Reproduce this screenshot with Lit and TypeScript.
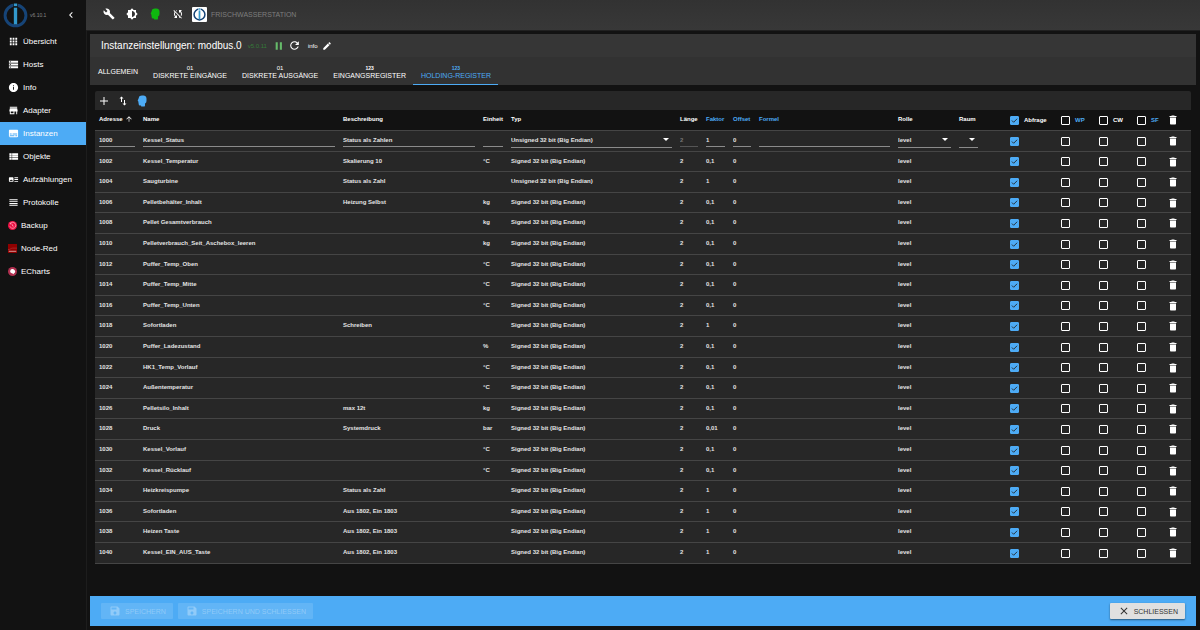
import { LitElement, html, css, svg, nothing } from "lit";
import { customElement, state } from "lit/decorators.js";
import { classMap } from "lit/directives/class-map.js";

const paths: Record<string, string> = {
  build: "M22.7 19l-9.1-9.1c.9-2.3.4-5-1.5-6.9-2-2-5-2.4-7.4-1.3L9 6 6 9 1.6 4.7C.4 7.1.9 10.1 2.9 12.1c1.9 1.9 4.6 2.4 6.9 1.5l9.1 9.1c.4.4 1 .4 1.4 0l2.3-2.3c.5-.4.5-1.1.1-1.4z",
  brightness: "M20 15.31L23.31 12 20 8.69V4h-4.69L12 .69 8.69 4H4v4.69L.69 12 4 15.31V20h4.69L12 23.31 15.31 20H20v-4.69zM12 18V6c3.31 0 6 2.69 6 6s-2.69 6-6 6z",
  head: "M12 1C8.500 1 6 2.500 5.500 6L3.500 11c-.3 1 .2 1.500 1 1.500L5.500 19c.2 1.200 1 2 2 2H10l.5 2H16c1.500 0 2-1 2-2v-4c2-1 3-3 3-6V7c0-4-3-6-6-6z",
  syncOff: "M10 6.35V4.26c-.8.21-1.55.54-2.23.96l1.46 1.46c.25-.12.5-.24.77-.33zm-7.14-.94l2.36 2.36C4.45 8.99 4 10.44 4 12c0 2.21.91 4.2 2.36 5.64L4 20h6v-6l-2.24 2.24C6.68 15.15 6 13.66 6 12c0-1 .25-1.94.68-2.77l8.08 8.08c-.25.13-.5.25-.77.34v2.09c.8-.21 1.55-.54 2.23-.96l2.36 2.36 1.27-1.27L4.14 4.14 2.86 5.41zM20 4h-6v6l2.24-2.24C17.32 8.85 18 10.34 18 12c0 1-.25 1.94-.68 2.77l1.46 1.46C19.55 15.01 20 13.56 20 12c0-2.21-.91-4.2-2.36-5.64L20 4z",
  refresh: "M17.65 6.35C16.2 4.9 14.21 4 12 4c-4.42 0-7.99 3.58-7.99 8s3.57 8 7.99 8c3.73 0 6.84-2.55 7.73-6h-2.08c-.82 2.33-3.04 4-5.65 4-3.31 0-6-2.69-6-6s2.69-6 6-6c1.66 0 3.14.69 4.22 1.78L13 11h7V4l-2.35 2.35z",
  pause: "M4 3h5v18H4zM14 3h5v18h-5z",
  edit: "M3 17.25V21h3.75L17.81 9.94l-3.75-3.75L3 17.25zM20.71 7.04c.39-.39.39-1.02 0-1.41l-2.34-2.34a.996.996 0 0 0-1.41 0l-1.83 1.83 3.75 3.75 1.83-1.83z",
  chevron: "M15.41 7.41L14 6l-6 6 6 6 1.41-1.41L10.83 12z",
  apps: "M4 8h4V4H4v4zm6 12h4v-4h-4v4zm-6 0h4v-4H4v4zm0-6h4v-4H4v4zm6 0h4v-4h-4v4zm6-10v4h4V4h-4zm-6 4h4V4h-4v4zm6 6h4v-4h-4v4zm0 6h4v-4h-4v4z",
  storage: "M2 20h20v-4H2v4zm2-3h2v2H4v-2zM2 4v4h20V4H2zm4 3H4V5h2v2zm-4 7h20v-4H2v4zm2-3h2v2H4v-2z",
  info: "M12 2C6.48 2 2 6.48 2 12s4.48 10 10 10 10-4.48 10-10S17.52 2 12 2zm1 15h-2v-6h2v6zm0-8h-2V7h2v2z",
  store: "M20 4H4v2h16V4zm1 10v-2l-1-5H4l-1 5v2h1v6h10v-6h4v6h2v-6h1zm-9 4H6v-4h6v4z",
  subtitles: "M20 4H4c-1.1 0-2 .9-2 2v12c0 1.1.9 2 2 2h16c1.1 0 2-.9 2-2V6c0-1.1-.9-2-2-2zM4 12h4v2H4v-2zm10 6H4v-2h10v2zm6 0h-4v-2h4v2zm0-4H10v-2h10v2z",
  viewList: "M3 14h5v-4H3v4zm0 5h5v-4H3v4zM3 9h5V5H3v4zm6 5h13v-4H9v4zm0 5h13v-4H9v4zM9 5v4h13V5H9z",
  artTrack: "M22 13h-8v-2h8v2zm0-6h-8v2h8V7zm-8 10h8v-2h-8v2zm-2-8v6c0 1.1-.9 2-2 2H4c-1.1 0-2-.9-2-2V9c0-1.1.9-2 2-2h6c1.1 0 2 .9 2 2zm-1.5 6l-2.25-3-1.75 2.26-1.25-1.51L3.5 15h7z",
  headline: "M3 15h18v-2H3v2zm0 4h18v-2H3v2zm0-8h18V9H3v2zm0-6v2h18V5H3z",
  add: "M20 13h-7v7h-2v-7H4v-2h7V4h2v7h7v2z",
  swap: "M9 3L5 6.99h3V14h2V6.99h3L9 3zm7 14.01V10h-2v7.01h-3L15 21l4-3.99h-3z",
  up: "M4 12l1.41 1.41L11 7.83V20h2V7.83l5.58 5.59L20 12l-8-8-8 8z",
  trash: "M6 19c0 1.1.9 2 2 2h8c1.1 0 2-.9 2-2V7H6v12zM19 4h-3.5l-1-1h-5l-1 1H5v2h14V4z",
  save: "M17 3H5c-1.11 0-2 .9-2 2v14c0 1.1.89 2 2 2h14c1.1 0 2-.9 2-2V7l-4-4zm-5 16c-1.66 0-3-1.34-3-3s1.34-3 3-3 3 1.34 3 3-1.34 3-3 3zm3-10H5V5h10v4z",
  close: "M19 6.41L17.59 5 12 10.59 6.41 5 5 6.41 10.59 12 5 17.59 6.41 19 12 13.41 17.59 19 19 17.59 13.41 12z",
};

const icon = (name: string, size = 12) =>
  html`<svg class="icon" width=${size} height=${size} viewBox="0 0 24 24" aria-hidden="true">${svg`<path d=${paths[name]} />`}</svg>`;

const logo = (size: number, cls: string) => html`<svg class=${cls} width=${size} height=${size} viewBox="0 0 24 24" aria-hidden="true">
  <circle cx="12" cy="12" r="10" fill="none" stroke="#164477" stroke-width="2.8" />
  <rect x="9.8" y="0" width="4.4" height="4" class="cut" />
  <rect x="10.4" y="4.5" width="3.2" height="16" fill="#3399cc" />
  <rect x="10.4" y="0.5" width="3.2" height="2.5" fill="#3399cc" />
</svg>`;

const pluginIcons: Record<string, unknown> = {
  backup: html`<svg width="9" height="9" viewBox="0 0 24 24" aria-hidden="true"><circle cx="12" cy="12" r="12" fill="#ee1144" /><path d="M6 7a8 8 0 1 1-1 7M6 4v4h4M12 9v4l3 1" fill="none" stroke="#ffc0cc" stroke-width="1.8" /></svg>`,
  nodered: html`<svg width="9" height="9" viewBox="0 0 24 24" aria-hidden="true"><rect width="24" height="24" fill="#8f0000" /><path d="M0 15c6 0 8-4 12-4h12" fill="none" stroke="#b84040" stroke-width="1.5" /><path d="M2 18h20v3H2z" fill="#c88" /></svg>`,
  echarts: html`<svg width="9" height="9" viewBox="0 0 24 24" aria-hidden="true"><circle cx="12" cy="12" r="12" fill="#b03050" /><path d="M6 10a6 6 0 0 1 11-2c4 3 2 9-2 9l2 3-5-3c-5 0-7-4-6-7z" fill="#fff" /></svg>`,
};

interface Register {
  address: string;
  name: string;
  description: string;
  unit: string;
  type: string;
  factor: string;
}

const S = "Signed 32 bit (Big Endian)";
const U = "Unsigned 32 bit (Big Endian)";

const registers: Register[] = (
  [
    ["1000", "Kessel_Status", "Status als Zahlen", "", U, "1"],
    ["1002", "Kessel_Temperatur", "Skalierung 10", "°C", S, "0,1"],
    ["1004", "Saugturbine", "Status als Zahl", "", U, "1"],
    ["1006", "Pelletbehälter_Inhalt", "Heizung Selbst", "kg", S, "0,1"],
    ["1008", "Pellet Gesamtverbrauch", "", "kg", S, "0,1"],
    ["1010", "Pelletverbrauch_Seit_Aschebox_leeren", "", "kg", S, "0,1"],
    ["1012", "Puffer_Temp_Oben", "", "°C", S, "0,1"],
    ["1014", "Puffer_Temp_Mitte", "", "°C", S, "0,1"],
    ["1016", "Puffer_Temp_Unten", "", "°C", S, "0,1"],
    ["1018", "Sofortladen", "Schreiben", "", S, "1"],
    ["1020", "Puffer_Ladezustand", "", "%", S, "0,1"],
    ["1022", "HK1_Temp_Vorlauf", "", "°C", S, "0,1"],
    ["1024", "Außentemperatur", "", "°C", S, "0,1"],
    ["1026", "Pelletsilo_Inhalt", "max 12t", "kg", S, "0,1"],
    ["1028", "Druck", "Systemdruck", "bar", S, "0,01"],
    ["1030", "Kessel_Vorlauf", "", "°C", S, "0,1"],
    ["1032", "Kessel_Rücklauf", "", "°C", S, "0,1"],
    ["1034", "Heizkreispumpe", "Status als Zahl", "", S, "1"],
    ["1036", "Sofortladen", "Aus 1802, Ein 1803", "", S, "1"],
    ["1038", "Heizen Taste", "Aus 1802, Ein 1803", "", S, "1"],
    ["1040", "Kessel_EIN_AUS_Taste", "Aus 1802, Ein 1803", "", S, "1"],
  ] as string[][]
).map(([address, name, description, unit, type, factor]) => ({ address, name, description, unit, type, factor }));

const base = css`
  * {
    box-sizing: border-box;
  }
  button,
  input,
  select {
    font: inherit;
    color: inherit;
    margin: 0;
    padding: 0;
    border: 0;
    border-radius: 0;
    background: none;
  }
  button {
    display: flex;
    align-items: center;
    justify-content: center;
    cursor: pointer;
  }
  svg {
    display: block;
    flex: none;
  }
  .icon {
    fill: currentColor;
  }
`;

@customElement("side-nav")
export class SideNav extends LitElement {
  static styles = [
    base,
    css`
      :host {
        display: block;
        width: 86px;
        flex: none;
        background: #121212;
        color: #fff;
      }
      .brand {
        display: flex;
        align-items: center;
        height: 30px;
        padding: 0 9px 0 3px;
      }
      .brand .cut {
        fill: #121212;
      }
      .version {
        flex: 1;
        padding-left: 2px;
        font-size: 5px;
        color: #888;
      }
      .item {
        display: flex;
        align-items: center;
        gap: 4px;
        height: 23px;
        padding: 0 8px;
        font-size: 8px;
        color: #fff;
        text-decoration: none;
        white-space: nowrap;
      }
      .item.active {
        background: #4dabf5;
      }
    `,
  ];

  private items = [
    ["apps", "Übersicht"],
    ["storage", "Hosts"],
    ["info", "Info"],
    ["store", "Adapter"],
    ["subtitles", "Instanzen"],
    ["viewList", "Objekte"],
    ["artTrack", "Aufzählungen"],
    ["headline", "Protokolle"],
    ["backup", "Backup"],
    ["nodered", "Node-Red"],
    ["echarts", "ECharts"],
  ];

  render() {
    return html`
      <div class="brand">
        ${logo(25, "logo")}<span class="version">v6.10.1</span>
        <button aria-label="Menü einklappen">${icon("chevron")}</button>
      </div>
      <nav>
        ${this.items.map(
          ([key, label]) => html`<a href="#${key}" class=${classMap({ item: true, active: key === "subtitles" })}
            >${pluginIcons[key] ?? icon(key, 11)}<span>${label}</span></a
          >`
        )}
      </nav>
    `;
  }
}

@customElement("register-table")
export class RegisterTable extends LitElement {
  static styles = [
    base,
    css`
      :host {
        display: block;
        font-size: 6px;
        line-height: 8px;
      }
      .tools {
        display: flex;
        align-items: center;
        gap: 7px;
        height: 19px;
        padding: 0 3px;
        background: #272727;
        border-radius: 2px 2px 0 0;
      }
      .ai {
        color: #4dabf5;
      }
      table {
        width: 100%;
        table-layout: fixed;
        border-collapse: separate;
        border-spacing: 0;
        background: #272727;
        font-weight: 700;
      }
      .c44 { width: 44px; }
      .c140 { width: 140px; }
      .c139 { width: 139px; }
      .c28 { width: 28px; }
      .c169 { width: 169px; }
      .c61 { width: 61px; }
      .c51 { width: 51px; }
      .c38 { width: 38px; }
      .c32 { width: 32px; }
      .c27 { width: 27px; }
      .c26 { width: 26px; }
      th,
      td {
        height: 21px;
        padding: 0 4px 2px;
        text-align: left;
        vertical-align: middle;
        white-space: nowrap;
        border-bottom: 1px solid #454545;
      }
      th {
        background: #121212;
      }
      td {
        color: #e4e4e4;
      }
      .tick {
        padding-bottom: 0;
      }
      .bin {
        padding: 0 2px;
        color: #fff;
      }
      tr:nth-child(5n + 2) td,
      tr:nth-child(5n + 4) td {
        height: 20px;
      }
      .head {
        display: flex;
        align-items: center;
        gap: 2px;
      }
      .head.check {
        gap: 5px;
      }
      .blue {
        color: #4dabf5;
      }
      .field {
        display: block;
        width: 100%;
        height: 14px;
        border-bottom: 1px solid #8b8b8b;
        outline: 0;
      }
      .field:disabled {
        color: #777;
        border-color: #555;
      }
      .pick {
        appearance: none;
        height: 16px;
        background: url("data:image/svg+xml,%3Csvg xmlns='http://www.w3.org/2000/svg' viewBox='0 0 6 3'%3E%3Cpath d='M0 0h6L3 3z' fill='%23fff'/%3E%3C/svg%3E")
          right 3px center / 6px 3px no-repeat;
      }
      .room {
        width: 19px;
      }
      .box {
        display: block;
        appearance: none;
        width: 9px;
        height: 9px;
        border: 1px solid #fff;
        border-radius: 1px;
      }
      .box:checked {
        border-color: #4dabf5;
        background: #4dabf5
          url("data:image/svg+xml,%3Csvg xmlns='http://www.w3.org/2000/svg' viewBox='0 0 8 8'%3E%3Cpath d='M1 4l2 2 4-4' fill='none' stroke='%23222'/%3E%3C/svg%3E")
          center / 7px 7px no-repeat;
      }
    `,
  ];

  private box(label: string, checked = false) {
    return html`<input class="box" type="checkbox" aria-label=${label} .checked=${checked} />`;
  }

  private field(label: string, value: string, disabled = false) {
    return html`<input class="field" type="text" aria-label=${label} .value=${value} ?disabled=${disabled} />`;
  }

  private row(r: Register, editing: boolean) {
    const f = (label: string, value: string, disabled = false) => (editing ? this.field(label, value, disabled) : value);
    const pick = (label: string, value: string, cls = "") =>
      editing
        ? html`<select class="field pick ${cls}" aria-label=${label}>
            <option>${value}</option>
          </select>`
        : value;
    return html`<tr>
      <td>${f("Adresse", r.address)}</td>
      <td>${f("Name", r.name)}</td>
      <td>${f("Beschreibung", r.description)}</td>
      <td>${f("Einheit", r.unit)}</td>
      <td>${pick("Typ", r.type)}</td>
      <td>${f("Länge", "2", editing)}</td>
      <td>${f("Faktor", r.factor)}</td>
      <td>${f("Offset", "0")}</td>
      <td>${f("Formel", "")}</td>
      <td>${pick("Rolle", "level")}</td>
      <td>${pick("Raum", "", "room")}</td>
      <td class="tick">${this.box("Abfrage", true)}</td>
      <td class="tick">${this.box("WP")}</td>
      <td class="tick">${this.box("CW")}</td>
      <td class="tick">${this.box("SF")}</td>
      <td class="bin"><button aria-label="Löschen">${icon("trash")}</button></td>
    </tr>`;
  }

  render() {
    const cols = ["c44", "", "c140", "c28", "c169", "c26", "c27", "c26", "c139", "c61", "c51", "c51", "c38", "c38", "c32", "c26"];
    const blue = ["Faktor", "Offset", "Formel"];
    return html`
      <div class="tools">
        <button aria-label="Hinzufügen">${icon("add")}</button>
        <button aria-label="Import/Export">${icon("swap")}</button>
        <button class="ai" aria-label="Expertenmodus">${icon("head")}</button>
      </div>
      <table>
        <colgroup>
          ${cols.map((c) => html`<col class=${c} />`)}
        </colgroup>
        <thead>
          <tr>
            <th><span class="head">Adresse ${icon("up", 8)}</span></th>
            ${["Name", "Beschreibung", "Einheit", "Typ", "Länge", "Faktor", "Offset", "Formel", "Rolle", "Raum"].map(
              (t) => html`<th class=${blue.includes(t) ? "blue" : nothing}>${t}</th>`
            )}
            ${["Abfrage", "WP", "CW", "SF"].map(
              (t, i) => html`<th class="tick">
                <label class="head check"
                  ><input class="box" type="checkbox" .checked=${i === 0} /><span class=${i % 2 ? "blue" : nothing}>${t}</span></label
                >
              </th>`
            )}
            <th class="bin"><button aria-label="Alle löschen">${icon("trash")}</button></th>
          </tr>
        </thead>
        <tbody>
          ${registers.map((r, i) => this.row(r, i === 0))}
        </tbody>
      </table>
    `;
  }
}

@customElement("app-root")
export class AppRoot extends LitElement {
  static styles = [
    base,
    css`
      :host {
        display: flex;
        min-height: 100vh;
        background: #121212;
        color: #fff;
        font-family: "Liberation Sans", Arial, sans-serif;
        font-size: 7px;
      }
      .main {
        flex: 1;
        min-width: 0;
        display: flex;
        flex-direction: column;
      }
      .appbar {
        display: flex;
        align-items: center;
        gap: 11px;
        height: 31px;
        padding: 0 17px 2px;
        background: linear-gradient(#323232, #383838);
        border-bottom: 1px solid #202020;
      }
      .tools {
        display: flex;
        gap: 11px;
      }
      .appbar {
        gap: 8px;
      }
      .expert {
        color: #0fb80f;
      }
      .host {
        display: flex;
        align-items: center;
        gap: 4px;
        color: #7d7d7d;
      }
      .badge {
        padding: 1px;
        background: #fff;
        border-radius: 1px;
      }
      .badge .cut {
        fill: #fff;
      }
      .page {
        flex: 1;
        display: flex;
        flex-direction: column;
        padding: 3px 4px 4px 3px;
        border-left: 1px solid #1d1d1d;
      }
      .title {
        display: flex;
        align-items: center;
        gap: 4px;
        height: 23px;
        padding: 0 11px;
        background: #363636;
      }
      h1 {
        margin: 0;
        font-size: 10px;
        line-height: 12px;
        font-weight: 400;
      }
      .ver {
        padding: 0 3px 0 2px;
        font-size: 6px;
        color: #357a38;
      }
      .run {
        color: #66bb6a;
      }
      .log {
        font-size: 6px;
        padding-left: 3px;
      }
      .tabs {
        display: flex;
        height: 28px;
        background: #323232;
      }
      .tab {
        flex-direction: column;
        padding: 2px 7px 0 8px;
        line-height: 8px;
        border-bottom: 1px solid transparent;
      }
      .tab.active {
        color: #4dabf5;
        border-color: #4dabf5;
      }
      .num {
        font-size: 6px;
      }
      .num.bold {
        font-size: 5px;
        font-weight: 700;
      }
      .body {
        flex: 1;
        padding: 6px 5px;
      }
      .footer {
        display: flex;
        align-items: center;
        gap: 5px;
        height: 30px;
        padding: 0 11px;
        background: #4dabf5;
      }
      .btn {
        gap: 4px;
        height: 16px;
        padding: 0 7px 0 8px;
        border-radius: 1px;
      }
      .btn:disabled {
        color: rgba(255, 255, 255, 0.3);
        background: rgba(255, 255, 255, 0.12);
      }
      .shut {
        margin-left: auto;
        color: #333;
        background: #e0e0e0;
        box-shadow: 0 1px 2px rgba(0, 0, 0, 0.5);
      }
    `,
  ];

  @state() private active = "HOLDING-REGISTER";

  private tabs = [
    ["", "ALLGEMEIN"],
    ["01", "DISKRETE EINGÄNGE"],
    ["01", "DISKRETE AUSGÄNGE"],
    ["123", "EINGANGSREGISTER"],
    ["123", "HOLDING-REGISTER"],
  ];

  render() {
    return html`
      <side-nav></side-nav>
      <div class="main">
        <header class="appbar">
          <div class="tools">
            <button aria-label="Einstellungen">${icon("build")}</button>
            <button aria-label="Farbschema">${icon("brightness")}</button>
            <button class="expert" aria-label="Expertenmodus">${icon("head")}</button>
            <button aria-label="Synchronisation">${icon("syncOff")}</button>
          </div>
          <div class="host">${logo(15, "badge")}<span>FRISCHWASSERSTATION</span></div>
        </header>
        <main class="page">
          <div class="title">
            <h1>Instanzeinstellungen: modbus.0</h1>
            <span class="ver">v5.0.11</span>
            <button class="run" aria-label="Pause">${icon("pause", 10)}</button>
            <button aria-label="Neu starten">${icon("refresh", 13)}</button>
            <span class="log">info</span>
            <button aria-label="Bearbeiten">${icon("edit", 10)}</button>
          </div>
          <div class="tabs" role="tablist">
            ${this.tabs.map(
              ([num, label]) => html`<button
                role="tab"
                class=${classMap({ tab: true, active: this.active === label })}
                aria-selected=${this.active === label}
                @click=${() => (this.active = label)}
              >
                ${num ? html`<span class=${classMap({ num: true, bold: num === "123" })}>${num}</span>` : nothing}<span>${label}</span>
              </button>`
            )}
          </div>
          <div class="body"><register-table></register-table></div>
          <footer class="footer">
            <button class="btn" disabled>${icon("save")}SPEICHERN</button>
            <button class="btn" disabled>${icon("save")}SPEICHERN UND SCHLIESSEN</button>
            <button class="btn shut">${icon("close")}SCHLIESSEN</button>
          </footer>
        </main>
      </div>
    `;
  }
}
